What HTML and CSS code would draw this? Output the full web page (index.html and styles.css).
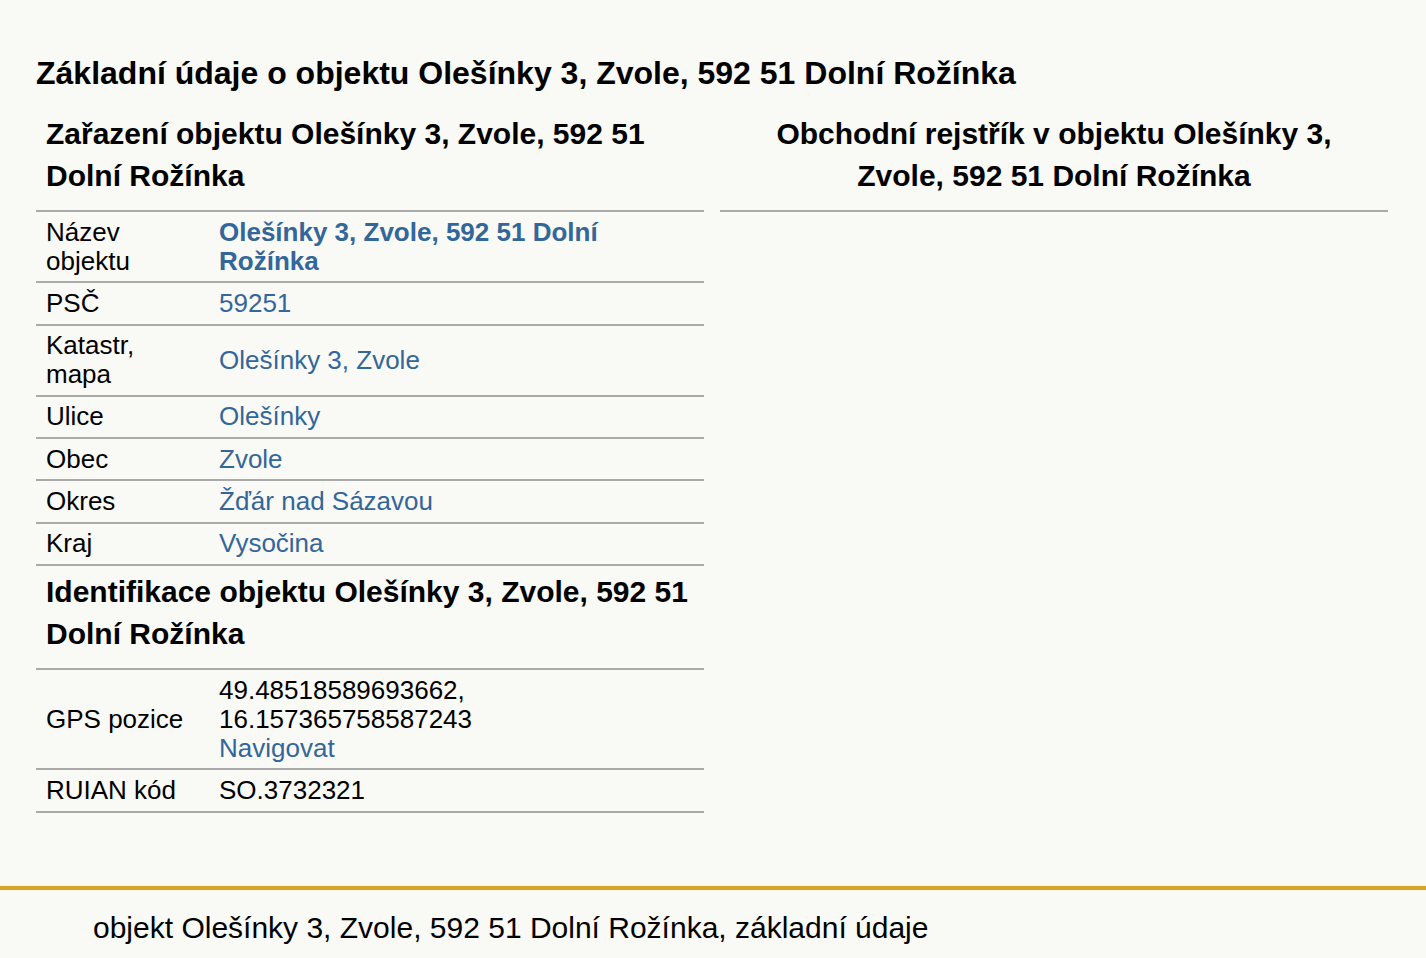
FILE: index.html
```html
<!DOCTYPE html>
<html lang="cs">
<head>
<meta charset="UTF-8">
<title>Olešínky 3, Zvole, 592 51 Dolní Rožínka</title>
<meta name="viewport" content="width=device-width, initial-scale=1.0">
<link rel="stylesheet" href="styles.css">
</head>
<body>

<main class="content">
    <h1>Základní údaje o objektu Olešínky 3, Zvole, 592 51 Dolní Rožínka</h1>

    <div class="columns">
        <section class="col">
            <h2>Zařazení objektu Olešínky 3, Zvole, 592 51 Dolní Rožínka</h2>
            <table class="info">
                <tr>
                    <th>Název objektu</th>
                    <td><a href="#" class="strong">Olešínky 3, Zvole, 592 51 Dolní Rožínka</a></td>
                </tr>
                <tr>
                    <th>PSČ</th>
                    <td><a href="#">59251</a></td>
                </tr>
                <tr>
                    <th>Katastr, mapa</th>
                    <td><a href="#">Olešínky 3, Zvole</a></td>
                </tr>
                <tr>
                    <th>Ulice</th>
                    <td><a href="#">Olešínky</a></td>
                </tr>
                <tr>
                    <th>Obec</th>
                    <td><a href="#">Zvole</a></td>
                </tr>
                <tr>
                    <th>Okres</th>
                    <td><a href="#">Žďár nad Sázavou</a></td>
                </tr>
                <tr>
                    <th>Kraj</th>
                    <td><a href="#">Vysočina</a></td>
                </tr>
            </table>

            <h2>Identifikace objektu Olešínky 3, Zvole, 592 51 Dolní Rožínka</h2>
            <table class="info">
                <tr>
                    <th>GPS pozice</th>
                    <td>49.48518589693662,<br>16.157365758587243<br><a href="#">Navigovat</a></td>
                </tr>
                <tr>
                    <th>RUIAN kód</th>
                    <td>SO.3732321</td>
                </tr>
            </table>
        </section>

        <section class="col">
            <h2 class="center">Obchodní rejstřík v objektu Olešínky 3, Zvole, 592 51 Dolní Rožínka</h2>
        </section>
    </div>
</main>

<footer class="footer">
    <p>objekt Olešínky 3, Zvole, 592 51 Dolní Rožínka, základní údaje</p>
</footer>

</body>
</html>
```

FILE: styles.css
```css
* {
    margin: 0;
    padding: 0;
    box-sizing: border-box;
}

body {
    font-family: "Liberation Sans", Arial, sans-serif;
    background: #f9f9f6;
    color: #000;
}

a {
    color: #336699;
    text-decoration: none;
}

a.strong {
    font-weight: bold;
}

.content {
    padding: 55px 38px 73px 36px;
}

h1 {
    font-size: 32px;
    line-height: 36px;
    margin-bottom: 17px;
}

.columns {
    display: grid;
    grid-template-columns: 1fr 1fr;
    gap: 16px;
    align-items: start;
}

h2 {
    font-size: 30px;
    line-height: 42px;
    padding: 0 10px 13px;
    margin-top: 5px;
    border-bottom: 2px solid #aaa;
}

h2.center {
    text-align: center;
}

.info {
    width: 100%;
    table-layout: fixed;
    border-collapse: collapse;
    font-size: 26px;
    line-height: 29px;
}

.info tr {
    border-bottom: 2px solid #aaa;
}

.info th,
.info td {
    text-align: left;
    font-weight: normal;
    vertical-align: middle;
    padding: 5.65px 10px;
}

.info th {
    width: 173px;
}

.footer {
    border-top: 4px solid #d8a222;
    padding: 20px 93px 16px;
    font-size: 30px;
    line-height: 36px;
}
```
